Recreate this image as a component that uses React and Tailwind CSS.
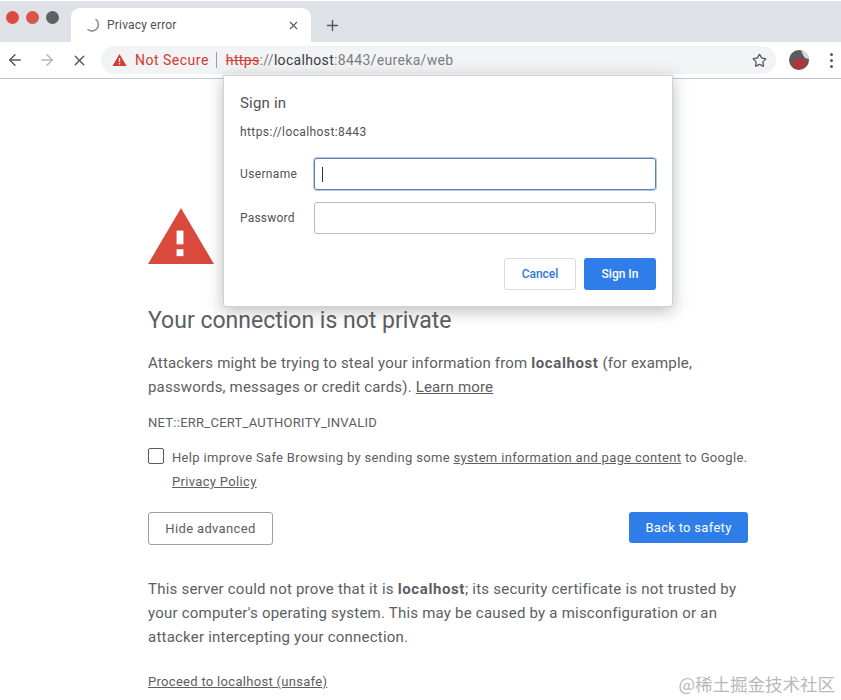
import { ArrowLeft, ArrowRight, Plus, Star, X } from "lucide-react";

const font = { fontFamily: "Roboto, sans-serif" };

const Dot = ({ className }) => <span className={`w-[13px] h-[13px] rounded-full shrink-0 ${className}`} />;

const TabBar = () => (
  <div className="h-[41px] mt-px bg-[#dee1e6] flex items-end">
    <div className="flex items-center gap-[7px] pl-[6px] h-[34px] mb-[8px] w-[71px] shrink-0">
      <Dot className="bg-[#dc4b41]" />
      <Dot className="bg-[#d8544c]" />
      <Dot className="bg-[#5f6064]" />
    </div>
    <div className="w-[240px] h-[34px] bg-white rounded-t-[9px] flex items-center pl-[14px] pr-[11px] shrink-0">
      <svg width="16" height="16" viewBox="0 0 16 16" fill="none" className="mr-[6px]">
        <path d="M11 2.5 A6 6 0 0 1 3 12.5" stroke="#8a8d91" strokeWidth="1.6" strokeLinecap="round" />
      </svg>
      <span className="text-[12px] text-[#4d5054] tracking-[0.2px] flex-1">Privacy error</span>
      <X size={13} strokeWidth={2} className="text-[#55585c]" />
    </div>
    <Plus size={17} strokeWidth={2} className="text-[#55585c] ml-[13px] mb-[8px]" />
  </div>
);

const Toolbar = () => (
  <div className="h-[37px] bg-white border-b border-[#c4c6c9] flex items-center">
    <ArrowLeft size={18} strokeWidth={2} className="text-[#55585c] ml-[6px]" />
    <ArrowRight size={18} strokeWidth={2} className="text-[#b5b7ba] ml-[14px]" />
    <X size={17} strokeWidth={2} className="text-[#55585c] ml-[15px]" />
    <div className="ml-[13px] w-[675px] h-[28px] rounded-full bg-[#f1f3f4] flex items-center pl-[11px] pr-[9px]">
      <svg width="15" height="14" viewBox="0 0 15 14">
        <path d="M7.5 1 L14.5 13 H0.5 Z" fill="#d33b30" />
        <rect x="6.8" y="5" width="1.4" height="4" fill="#fff" />
        <rect x="6.8" y="10" width="1.4" height="1.4" fill="#fff" />
      </svg>
      <span className="ml-[8px] text-[14px] text-[#d33b30] tracking-[0.5px]">Not Secure</span>
      <span className="ml-[7px] w-px h-[16px] bg-[#9a9da0]" />
      <span className="ml-[9px] text-[14px] text-[#7b7e82] tracking-[0.33px] flex-1">
        <span className="text-[#d33b30] line-through">https</span>://<span className="text-[#3c4043]">localhost</span>:8443/eureka/web
      </span>
      <Star size={15} strokeWidth={2} className="text-[#55585c]" />
    </div>
    <svg width="20" height="20" viewBox="0 0 20 20" className="ml-[13px]">
      <circle cx="10" cy="10" r="10" fill="#5a5b5e" />
      <path d="M3 13 C6 8 11 7 15 10 L19 12 A10 10 0 0 1 4 18 Z" fill="#a8393a" />
      <path d="M12 0.4 A10 10 0 0 1 20 9 L16 8 L14 5 Z" fill="#d9dadc" />
    </svg>
    <div className="ml-[21px] flex flex-col gap-[3px]">
      <span className="w-[3px] h-[3px] rounded-full bg-[#55585c]" />
      <span className="w-[3px] h-[3px] rounded-full bg-[#55585c]" />
      <span className="w-[3px] h-[3px] rounded-full bg-[#55585c]" />
    </div>
  </div>
);

const SignInDialog = () => (
  <div className="absolute left-[223px] top-[75px] w-[450px] h-[232px] bg-white rounded-b-[3px] border border-[#d0d1d3] shadow-[0_4px_16px_rgba(60,64,67,0.35)] px-[16px] text-[#4f5256]">
    <div className="mt-[17px] text-[15px] leading-[20px] tracking-[0.2px]">Sign in</div>
    <div className="mt-[11px] text-[12px] leading-[16px] tracking-[0.4px]">https://localhost:8443</div>
    <div className="mt-[18px] flex items-center gap-[16px]">
      <span className="w-[58px] text-[12px] tracking-[0.35px]">Username</span>
      <div className="w-[342px] h-[32px] rounded-[3px] border border-[#5b82b8] shadow-[0_0_0_1px_rgba(91,130,184,0.45)] flex items-center pl-[7px]">
        <span className="w-px h-[15px] bg-[#333]" />
      </div>
    </div>
    <div className="mt-[12px] flex items-center gap-[16px]">
      <span className="w-[58px] text-[12px] tracking-[0.2px]">Password</span>
      <div className="w-[342px] h-[32px] rounded-[3px] border border-[#b9bbbe]" />
    </div>
    <div className="mt-[24px] flex justify-end gap-[8px]">
      <div className="w-[72px] h-[32px] rounded-[3px] border border-[#dadce0] flex items-center justify-center text-[12px] font-medium text-[#2f78d6]">Cancel</div>
      <div className="w-[72px] h-[32px] rounded-[3px] bg-[#2f7de9] flex items-center justify-center text-[12px] font-medium text-white">Sign In</div>
    </div>
  </div>
);

const PageContent = () => (
  <div className="pl-[148px] w-[748px] text-[#5b5e62]">
    <svg width="66" height="56" viewBox="0 0 67 57" className="mt-[129px] block">
      <path d="M33.5 0 L67 57 H0 Z" fill="#d9493c" />
      <rect x="29" y="23" width="7" height="14" fill="#fff" />
      <rect x="29" y="42" width="7" height="7" fill="#fff" />
    </svg>
    <h1 className="mt-[41px] text-[23px] leading-[32px] font-normal">Your connection is not private</h1>
    <p className="mt-[14px] text-[15px] leading-[24px] tracking-[0.17px]">
      Attackers might be trying to steal your information from <b className="font-bold tracking-[0.6px]">localhost</b> (for example,
      <br />
      passwords, messages or credit cards). <span className="underline">Learn more</span>
    </p>
    <div className="mt-[16px] text-[13px] leading-[16px] tracking-[0.26px]">NET::ERR_CERT_AUTHORITY_INVALID</div>
    <div className="mt-[17px] flex gap-[8px]">
      <span className="w-[16px] h-[16px] rounded-[2px] border border-[#55585c] shrink-0" />
      <p className="text-[13px] leading-[24px] tracking-[0.33px] whitespace-nowrap -mt-[2px]">
        Help improve Safe Browsing by sending some <span className="underline">system information and page content</span> to Google.
        <br />
        <span className="underline">Privacy Policy</span>
      </p>
    </div>
    <div className="mt-[18px] flex justify-between items-start">
      <div className="w-[125px] h-[33px] rounded-[3px] border border-[#9da0a3] flex items-center justify-center text-[13px] tracking-[0.35px]">Hide advanced</div>
      <div className="w-[119px] h-[31px] rounded-[3px] bg-[#2f7de9] flex items-center justify-center text-[13px] tracking-[0.3px] text-white">Back to safety</div>
    </div>
    <p className="mt-[32px] text-[15px] leading-[24px] tracking-[0.22px]">
      This server could not prove that it is <b className="font-bold tracking-[0.6px]">localhost</b>; its security certificate is not trusted by
      <br />
      your computer's operating system. This may be caused by a misconfiguration or an
      <br />
      attacker intercepting your connection.
    </p>
    <div className="mt-[23px] text-[13px] leading-[20px] tracking-[0.3px] underline">Proceed to localhost (unsafe)</div>
  </div>
);

const App = () => (
  <div className="relative w-[841px] h-[700px] overflow-hidden bg-white" style={font}>
    <TabBar />
    <Toolbar />
    <PageContent />
    <SignInDialog />
    <div className="absolute right-[6px] bottom-[6px] text-[17.5px] leading-[20px] text-[#b9b9b9]" style={{ fontFamily: "'Noto Sans CJK SC', sans-serif" }}>@稀土掘金技术社区</div>
  </div>
);

export default App;
